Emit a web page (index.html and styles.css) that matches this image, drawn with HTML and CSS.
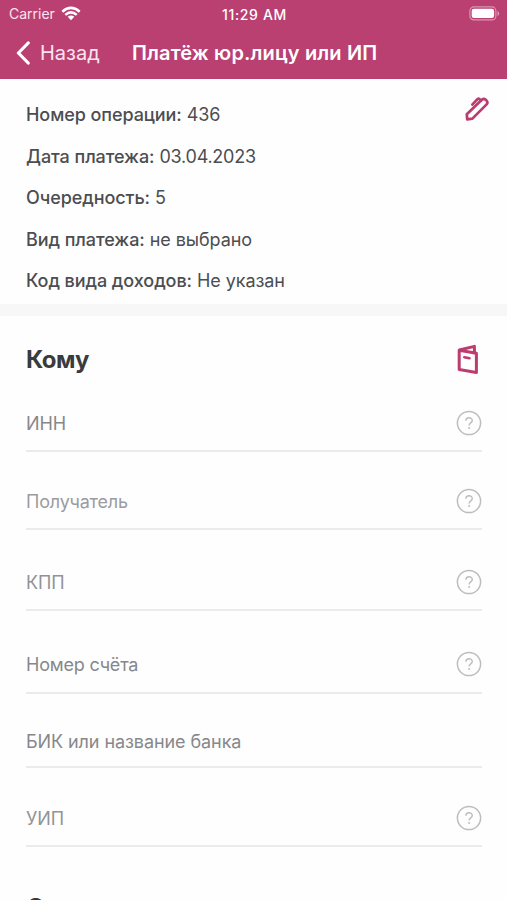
FILE: index.html
```html
<!DOCTYPE html>
<html lang="ru">
<head>
<meta charset="utf-8">
<title>Платёж юр.лицу или ИП</title>
<link rel="stylesheet" href="styles.css">
</head>
<body>
<svg width="0" height="0" class="defs"><symbol id="help" viewBox="0 0 26 26"><circle cx="13" cy="13" r="11.6" fill="none" stroke="#bdbdbd" stroke-width="1.5"/><path d="M9.9 10.8c0-4 6.4-3.9 6.4-.3 0 2.4-3.2 2.4-3.2 5" fill="none" stroke="#bdbdbd" stroke-width="1.4"/><circle cx="13.1" cy="18" r="1" fill="#bdbdbd"/></symbol></svg>
<header class="header">
  <div class="status">
    <div class="carrier"><span>Carrier</span>
      <svg width="20" height="15" viewBox="0 0 20 15"><g fill="none" stroke="#fff" stroke-width="2.5"><path d="M1.3 5.7Q10-2 18.7 5.7"/><path d="M4.3 8.9Q10 3.9 15.7 8.9"/></g><path d="M6.7 10.8Q10 8 13.3 10.8L10 14.2Z" fill="#fff"/></svg>
    </div>
    <span class="time">11:29 AM</span>
    <svg class="battery" width="31" height="15" viewBox="0 0 31 15"><rect x=".9" y=".9" width="26" height="13" rx="4" fill="none" stroke="#fff" stroke-opacity=".45" stroke-width="1.2"/><rect x="2.7" y="2.7" width="22.4" height="9.4" rx="2.3" fill="#fff"/><path d="M28.5 5v5q1.7-.7 1.7-2.5T28.5 5Z" fill="#fff" fill-opacity=".5"/></svg>
  </div>
  <nav class="nav">
    <a class="back"><svg width="16" height="24" viewBox="0 0 16 24"><path d="M13.2 2 3.4 12l9.8 10" fill="none" stroke="#fff" stroke-width="3.2" stroke-linecap="round" stroke-linejoin="round"/></svg><span>Назад</span></a>
    <h1 class="title">Платёж юр.лицу или ИП</h1>
  </nav>
</header>
<section class="details">
  <div class="list">
    <p><b>Номер операции:</b> 436</p>
    <p><b>Дата платежа:</b> <span class="date">03.04.2023</span></p>
    <p><b>Очередность:</b> 5</p>
    <p><b>Вид платежа:</b> не выбрано</p>
    <p><b>Код вида доходов:</b> Не указан</p>
  </div>
  <svg class="edit" width="26" height="26" viewBox="0 0 26 26"><g fill="none" stroke="#bc3c70" stroke-width="2.7" stroke-linejoin="round" stroke-linecap="round"><path d="M3.2 23.3 2.8 18.3 17.8 3.8q2-1.6 4 0l.8.8q1.6 1.9 0 3.8L8.4 22.6Z"/><path d="M8.3 8.6 13.4 3.2q1.1-1 2.3 0l1.4 1.3"/></g></svg>
</section>
<main class="payee">
  <div class="heading"><h2>Кому</h2>
    <svg class="book" width="24" height="32" viewBox="0 0 24 32"><g fill="none" stroke="#bc3c70" stroke-width="3" stroke-linejoin="round" stroke-linecap="round"><path d="M2.2 6.3 19.4 9.3v19.2L2.2 25.6Z"/><path d="M2.4 6 17.4 2.4V8.8"/><path d="M7.3 13.3l5.2.9" stroke-width="2.6"/></g></svg>
  </div>
  <div class="field inn"><span>ИНН</span><svg class="help"><use href="#help"/></svg></div>
  <div class="field name"><span>Получатель</span><svg class="help"><use href="#help"/></svg></div>
  <div class="field kpp"><span>КПП</span><svg class="help"><use href="#help"/></svg></div>
  <div class="field account"><span>Номер счёта</span><svg class="help"><use href="#help"/></svg></div>
  <div class="field bank"><span>БИК или название банка</span></div>
  <div class="field uip"><span>УИП</span><svg class="help"><use href="#help"/></svg></div>
  <h2 class="next">Сумма</h2>
</main>
</body>
</html>
```
FILE: styles.css
```css
* { box-sizing: border-box; margin: 0; padding: 0; }
body { height: 900px; overflow: hidden; background: #fefefe; color: #4c4d51; font-family: Inter, "Liberation Sans", sans-serif; font-size: 18px; }
svg { display: block; flex: none; }
.defs { position: absolute; }
.header { height: 79px; background: #ba4072; color: #fff; }
.status { height: 28px; padding: 0 7px 0 9px; display: grid; grid-template-columns: 1fr auto 1fr; align-items: center; font-size: 14px; }
.carrier { display: flex; align-items: center; gap: 6px; height: 26px; align-self: start; color: #fbe4ee; }
.time { font-weight: 500; font-size: 14px; letter-spacing: .65px; }
.battery { justify-self: end; align-self: start; margin-top: 6px; }
.nav { height: 49px; display: flex; align-items: center; padding-left: 15px; }
.back { display: flex; align-items: center; gap: 9px; width: 117px; font-size: 20px; color: #fbe4ee; }
.title { font-size: 20px; font-weight: 600; letter-spacing: .14px; white-space: nowrap; }
.details { height: 237px; display: flex; justify-content: space-between; padding: 15px 17px 0 26px; border-bottom: 12px solid #f7f7f7; }
.list p { height: 41.5px; line-height: 42px; white-space: nowrap; letter-spacing: -.07px; }
.list b { font-weight: 500; }
.date { letter-spacing: -.25px; }
.edit { margin-top: 2px; }
.payee { padding: 0 25px 0 26px; }
.heading { height: 78px; padding-top: 10px; display: flex; align-items: center; justify-content: space-between; }
.book { margin-right: 1px; }
h2 { font-size: 24px; font-weight: 700; letter-spacing: -.5px; color: #3a3b3f; line-height: 30px; }
.field { display: flex; justify-content: space-between; align-items: flex-end; border-bottom: 2px solid #ebebeb; color: #87888b; line-height: 24px; letter-spacing: -.08px; }
.help { width: 26px; height: 26px; }
.inn { height: 58px; padding-bottom: 14px; }
.name { height: 78px; padding-bottom: 14px; color: #9b9c9f; letter-spacing: -.2px; }
.kpp { height: 81px; padding-bottom: 14px; color: #929396; }
.account { height: 83px; padding-bottom: 15px; letter-spacing: -.2px; }
.bank { height: 74px; padding-bottom: 12px; }
.uip { height: 79px; padding-bottom: 14px; color: #929396; }
.next { margin-top: 46px; font-size: 25px; }
```
